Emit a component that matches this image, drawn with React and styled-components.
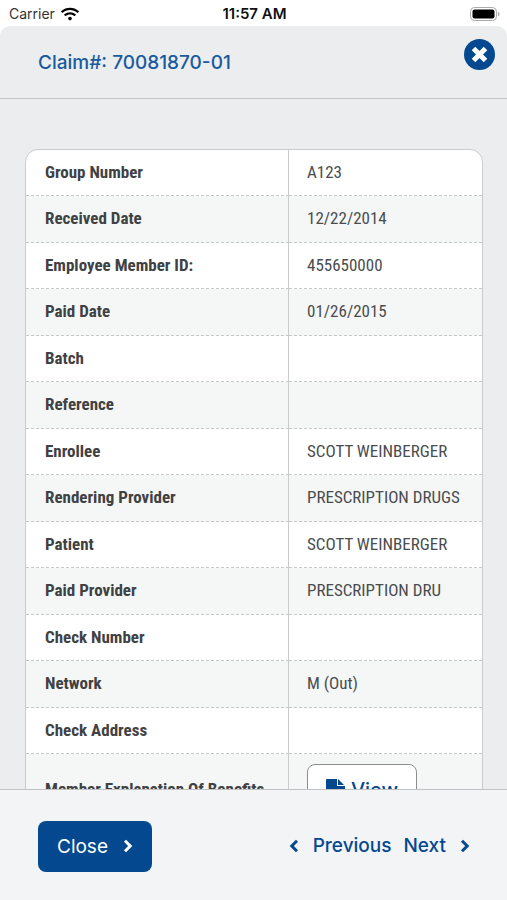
import React from "react";
import styled, { createGlobalStyle } from "styled-components";
import { FaWifi } from "react-icons/fa";

const GlobalStyle = createGlobalStyle`
  * {
    box-sizing: border-box;
  }

  body {
    margin: 0;
    background: #fff;
    font-family: Inter, "Liberation Sans", sans-serif;
  }

  button {
    font-family: inherit;
    cursor: pointer;
  }
`;

const Screen = styled.div`
  height: 100vh;
  display: flex;
  flex-direction: column;
  overflow: hidden;
`;

const StatusBar = styled.div`
  flex: none;
  height: 26px;
  display: grid;
  grid-template-columns: 1fr auto 1fr;
  align-items: center;
  padding: 2px 7px 0 9px;
  font-size: 14px;
  line-height: 20px;
  color: #111;
`;

const Carrier = styled.div`
  display: flex;
  align-items: center;
  gap: 6px;
  color: #333;

  svg {
    color: #000;
  }
`;

const Clock = styled.time`
  font-size: 15px;
  font-weight: 600;
`;

const Battery = styled.svg`
  justify-self: end;
  display: block;
`;

const Header = styled.header`
  flex: none;
  display: flex;
  align-items: flex-start;
  justify-content: space-between;
  height: 73px;
  padding: 13px 12px 0 38px;
  background: #ebedee;
  border-bottom: 1px solid #c0c2c4;
  border-radius: 10px 10px 0 0;
`;

const Title = styled.h1`
  margin: 11px 0 0;
  font-size: 19px;
  font-weight: 500;
  line-height: 26px;
  color: #1a5a9f;
`;

const CloseIcon = styled.button`
  display: flex;
  align-items: center;
  justify-content: center;
  width: 31px;
  height: 31px;
  padding: 0;
  border: 0;
  border-radius: 50%;
  background: #044990;
  color: #fff;
`;

const Content = styled.main`
  flex: 1;
  min-height: 0;
  overflow-y: auto;
  scrollbar-width: none;
  padding: 50px 24px 40px 25px;
  background: #ebedef;
`;

const ClaimTable = styled.table`
  width: 100%;
  table-layout: fixed;
  border: 1px solid #c9cbcd;
  border-radius: 13px;
  border-spacing: 0;
  overflow: hidden;
  background: #fff;
  font-family: "Roboto Condensed", Roboto, sans-serif;
  font-size: 17px;
  line-height: 22px;
  color: #4a4c4e;
`;

const Row = styled.tr`
  height: 46px;

  &:nth-child(even) {
    height: 47px;
    background: #f5f7f7;
  }

  &:not(:last-child) > * {
    border-bottom: 1px dashed #c6c8ca;
  }
`;

const Label = styled.th`
  width: 263px;
  padding: 0 0 2px 19px;
  border-right: 1px solid #c9cbcd;
  text-align: left;
  font-weight: 700;
  color: #3f4143;
  white-space: nowrap;
`;

const Value = styled.td`
  padding: ${(props) => (props.$action ? "10px 18px" : "0 0 2px 18px")};
  white-space: nowrap;
`;

const ViewButton = styled.button`
  display: flex;
  align-items: center;
  justify-content: center;
  gap: 6px;
  width: 110px;
  height: 52px;
  border: 1px solid #8b8e91;
  border-radius: 8px;
  background: #fff;
  color: #044990;
  font-family: Inter, "Liberation Sans", sans-serif;
  font-size: 20px;
  font-weight: 500;
`;

const Footer = styled.footer`
  flex: none;
  display: flex;
  align-items: center;
  justify-content: space-between;
  height: 111px;
  padding: 2px 37px 0 38px;
  background: #f3f4f6;
  border-top: 1px solid #c0c2c4;
`;

const CloseButton = styled.button`
  display: flex;
  align-items: center;
  justify-content: space-between;
  width: 114px;
  height: 51px;
  padding: 0 19px;
  border: 0;
  border-radius: 8px;
  background: #044990;
  color: #fff;
  font-size: 19px;
`;

const Pager = styled.nav`
  display: flex;
  gap: 12px;
`;

const PagerButton = styled.button`
  display: flex;
  align-items: center;
  gap: 14px;
  padding: 0;
  border: 0;
  background: none;
  color: #044990;
  font-size: 19px;
  font-weight: 500;
  line-height: 26px;
`;

const details = [
  { label: "Group Number", value: "A123" },
  { label: "Received Date", value: "12/22/2014" },
  { label: "Employee Member ID:", value: "455650000" },
  { label: "Paid Date", value: "01/26/2015" },
  { label: "Batch", value: "" },
  { label: "Reference", value: "" },
  { label: "Enrollee", value: "SCOTT WEINBERGER" },
  { label: "Rendering Provider", value: "PRESCRIPTION DRUGS" },
  { label: "Patient", value: "SCOTT WEINBERGER" },
  { label: "Paid Provider", value: "PRESCRIPTION DRU" },
  { label: "Check Number", value: "" },
  { label: "Network", value: "M (Out)" },
  { label: "Check Address", value: "" },
];

// Document with a folded corner
const FileIcon = () => (
  <svg width="19" height="22" viewBox="0 0 19 22" fill="currentColor" aria-hidden="true">
    <path d="M1 0h10v7h8v14a1 1 0 0 1-1 1H1a1 1 0 0 1-1-1V1a1 1 0 0 1 1-1z" />
    <path d="M12 0l6 6h-6z" />
  </svg>
);

const Chevron = ({ left }) => (
  <svg
    width="10"
    height="14"
    viewBox="0 0 10 14"
    fill="none"
    stroke="currentColor"
    strokeWidth="3"
    aria-hidden="true"
  >
    <path d={left ? "M8 1.8L2.8 7L8 12.2" : "M2 1.8L7.2 7L2 12.2"} />
  </svg>
);

const CrossIcon = () => (
  <svg width="17" height="17" viewBox="0 0 17 17" stroke="currentColor" strokeWidth="5" aria-hidden="true">
    <path d="M2.5 2.5l12 12M14.5 2.5l-12 12" />
  </svg>
);

export default function App() {
  return (
    <Screen>
      <GlobalStyle />
      <StatusBar>
        <Carrier>
          Carrier <FaWifi size={18} />
        </Carrier>
        <Clock>11:57 AM</Clock>
        <Battery width="30" height="15" viewBox="0 0 30 15" aria-hidden="true">
          <rect x="0.5" y="0.5" width="26" height="13" rx="4" fill="#fff" stroke="#aaa" />
          <rect x="2.5" y="2.5" width="22" height="9" rx="2" fill="#000" />
          <path d="M28 5c2 0 2 4 0 4z" fill="#aaa" />
        </Battery>
      </StatusBar>

      <Header>
        <Title>Claim#: 70081870-01</Title>
        <CloseIcon type="button" aria-label="Close">
          <CrossIcon />
        </CloseIcon>
      </Header>

      <Content>
        <ClaimTable>
          <tbody>
            {details.map(({ label, value }) => (
              <Row key={label}>
                <Label scope="row">{label}</Label>
                <Value>{value}</Value>
              </Row>
            ))}
            <Row>
              <Label scope="row">Member Explanation Of Benefits</Label>
              <Value $action>
                <ViewButton type="button">
                  <FileIcon />
                  View
                </ViewButton>
              </Value>
            </Row>
          </tbody>
        </ClaimTable>
      </Content>

      <Footer>
        <CloseButton type="button">
          Close <Chevron />
        </CloseButton>
        <Pager aria-label="Claims">
          <PagerButton type="button">
            <Chevron left /> Previous
          </PagerButton>
          <PagerButton type="button">
            Next <Chevron />
          </PagerButton>
        </Pager>
      </Footer>
    </Screen>
  );
}
